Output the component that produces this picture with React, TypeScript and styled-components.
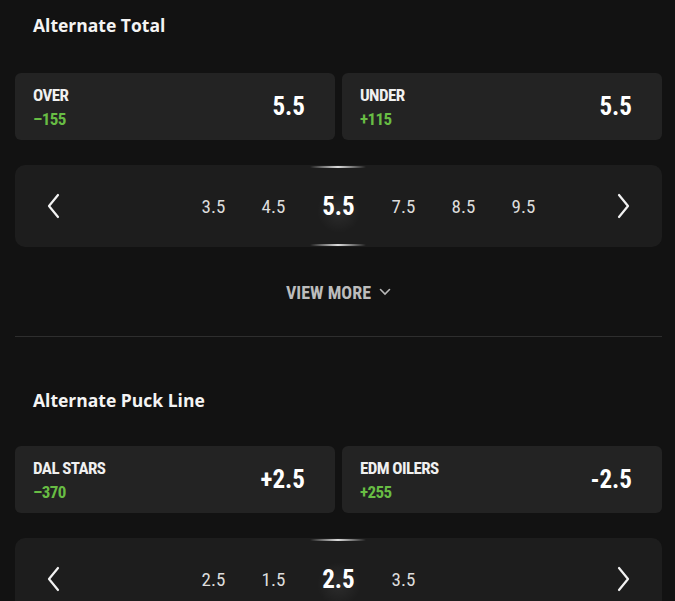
import React from 'react';
import styled, { createGlobalStyle } from 'styled-components';

const GlobalStyle = createGlobalStyle`
  html, body {
    margin: 0;
    padding: 0;
    background: #121212;
  }
  body {
    font-family: "Open Sans", "Noto Sans", sans-serif;
  }
`;

const condensed = `"Roboto Condensed", "Liberation Sans Narrow", "DejaVu Sans Condensed", "DejaVu Sans", sans-serif`;

const Page = styled.div`
  width: 675px;
  height: 601px;
  overflow: hidden;
  box-sizing: border-box;
  padding: 0 13px 0 15px;
  background: #121212;
`;

const Section = styled.section<{ $top: number }>`
  display: flex;
  flex-direction: column;
  padding-top: ${p => p.$top}px;
`;

const Title = styled.h2<{ $gap: number }>`
  margin: 0 0 ${p => p.$gap}px 18px;
  height: 24px;
  line-height: 24px;
  font-size: 17.5px;
  font-weight: 700;
  color: #f4f4f4;
`;

const CardRow = styled.div`
  display: grid;
  grid-template-columns: 1fr 1fr;
  gap: 7px;
`;

const Card = styled.div`
  height: 67px;
  box-sizing: border-box;
  background: #232323;
  border-radius: 6px;
  display: flex;
  align-items: center;
  justify-content: space-between;
  padding: 0 30px 0 18px;
`;

const CardText = styled.div`
  display: flex;
  flex-direction: column;
  gap: 6px;
  font-family: ${condensed};
  font-stretch: condensed;
`;

const Label = styled.span`
  font-size: 17px;
  font-weight: 700;
  letter-spacing: -0.6px;
  color: #f0f0f0;
  line-height: 18px;
`;

const Odds = styled.span`
  font-size: 17px;
  font-weight: 700;
  letter-spacing: -0.6px;
  color: #68bd44;
  line-height: 18px;
`;

const Value = styled.span`
  font-family: ${condensed};
  font-stretch: condensed;
  font-size: 25px;
  font-weight: 700;
  color: #ffffff;
`;

const Slider = styled.div`
  margin-top: 25px;
  height: 82px;
  background: #1d1d1d;
  border-radius: 10px;
  display: flex;
  align-items: stretch;
  padding: 0 30px;
`;

const Arrow = styled.button`
  width: 16px;
  padding: 0;
  border: none;
  background: none;
  display: flex;
  align-items: center;
  justify-content: center;
  cursor: pointer;
`;

const Track = styled.div`
  flex: 1;
  display: flex;
  align-items: stretch;
`;

const Side = styled.div<{ $end?: boolean }>`
  flex: 1;
  display: flex;
  align-items: center;
  justify-content: ${p => (p.$end ? 'flex-end' : 'flex-start')};
`;

const Option = styled.span`
  width: 60px;
  text-align: center;
  font-family: ${condensed};
  font-stretch: condensed;
  font-size: 19px;
  color: #dcdcdc;
`;

const Selected = styled.div`
  position: relative;
  width: 70px;
  display: flex;
  align-items: center;
  justify-content: center;
  font-family: ${condensed};
  font-stretch: condensed;
  font-size: 25px;
  font-weight: 700;
  color: #ffffff;
  background: radial-gradient(circle at 50% 56%, rgba(255, 255, 255, 0.07) 0, rgba(255, 255, 255, 0) 22px);

  &::before,
  &::after {
    content: '';
    position: absolute;
    left: 6px;
    right: 8px;
    height: 2px;
    background: linear-gradient(90deg, rgba(255,255,255,0), rgba(255,255,255,0.85) 50%, rgba(255,255,255,0));
  }
  &::before {
    top: 1px;
  }
  &::after {
    bottom: 1px;
  }
`;

const ViewMore = styled.button`
  align-self: center;
  margin-top: 35px;
  height: 20px;
  border: none;
  background: none;
  padding: 0;
  display: flex;
  align-items: center;
  gap: 8px;
  font-family: ${condensed};
  font-stretch: condensed;
  font-size: 18px;
  font-weight: 700;
  color: #bcbcbc;
  cursor: pointer;
`;

const Divider = styled.hr`
  margin: 34px 0 0;
  border: none;
  height: 1px;
  background: #2e2e2e;
`;

const Chevron = ({ dir }: { dir: 'left' | 'right' }) => (
  <svg width="14" height="26" viewBox="0 0 14 26" fill="none">
    <polyline
      points={dir === 'left' ? '12,2 3,13 12,24' : '2,2 11,13 2,24'}
      stroke="#f2f2f2"
      strokeWidth="2.2"
      strokeLinecap="round"
      strokeLinejoin="round"
    />
  </svg>
);

const Caret = () => (
  <svg width="12" height="8" viewBox="0 0 12 8" fill="none">
    <polyline points="1.5,1.5 6,6 10.5,1.5" stroke="#b9b9b9" strokeWidth="1.6" strokeLinecap="round" />
  </svg>
);

interface Outcome {
  label: string;
  odds: string;
  value: string;
}

interface MarketProps {
  title: string;
  top: number;
  gap: number;
  sides: [Outcome, Outcome];
  before: string[];
  current: string;
  after: string[];
  children?: React.ReactNode;
}

const Market: React.FC<MarketProps> = ({ title, top, gap, sides, before, current, after, children }) => (
  <Section $top={top}>
    <Title $gap={gap}>{title}</Title>
    <CardRow>
      {sides.map(s => (
        <Card key={s.label}>
          <CardText>
            <Label>{s.label}</Label>
            <Odds>{s.odds}</Odds>
          </CardText>
          <Value>{s.value}</Value>
        </Card>
      ))}
    </CardRow>
    <Slider>
      <Arrow aria-label="previous">
        <Chevron dir="left" />
      </Arrow>
      <Track>
        <Side $end>
          {before.map((v, i) => (
            <Option key={i}>{v}</Option>
          ))}
        </Side>
        <Selected>{current}</Selected>
        <Side>
          {after.map((v, i) => (
            <Option key={i}>{v}</Option>
          ))}
        </Side>
      </Track>
      <Arrow aria-label="next">
        <Chevron dir="right" />
      </Arrow>
    </Slider>
    {children}
  </Section>
);

const App: React.FC = () => (
  <Page>
    <GlobalStyle />
    <Market
      title="Alternate Total"
      top={13}
      gap={36}
      sides={[
        { label: 'OVER', odds: '\u2013155', value: '5.5' },
        { label: 'UNDER', odds: '+115', value: '5.5' },
      ]}
      before={['3.5', '4.5']}
      current="5.5"
      after={['7.5', '8.5', '9.5']}
    >
      <ViewMore>
        VIEW MORE <Caret />
      </ViewMore>
      <Divider />
    </Market>
    <Market
      title="Alternate Puck Line"
      top={51}
      gap={34}
      sides={[
        { label: 'DAL STARS', odds: '\u2013370', value: '+2.5' },
        { label: 'EDM OILERS', odds: '+255', value: '-2.5' },
      ]}
      before={['2.5', '1.5']}
      current="2.5"
      after={['3.5']}
    />
  </Page>
);

export default App;
